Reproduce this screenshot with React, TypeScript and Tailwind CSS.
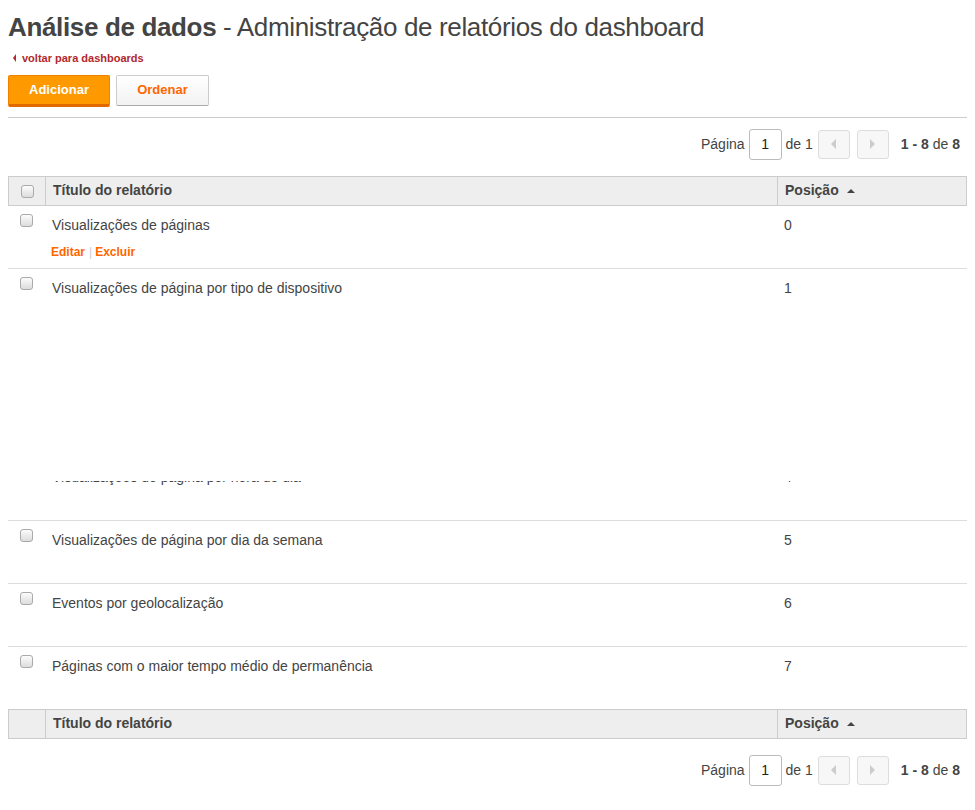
const reports = [
  'Visualizações de páginas',
  'Visualizações de página por tipo de dispositivo',
  'Visualizações de página por navegador',
  'Visualizações de página por sistema operacional',
  'Visualizações de página por hora do dia',
  'Visualizações de página por dia da semana',
  'Eventos por geolocalização',
  'Páginas com o maior tempo médio de permanência',
];

function Box() {
  return (
    <span className="inline-block h-[13px] w-[13px] rounded-[3px] border border-[#aaa] bg-gradient-to-b from-[#fcfcfc] to-[#dcdcdc]" />
  );
}

function Pager() {
  return (
    <div className="flex items-center justify-end gap-[4px] pr-[7px] text-[14px] text-[#444]">
      <span>Página</span>
      <span className="flex h-[31px] w-[33px] items-center justify-center rounded-[3px] border border-[#bbb] text-[#222]">
        1
      </span>
      <span>de 1</span>
      <span className="ml-[1px] flex h-[29px] w-[32px] items-center justify-center rounded-[3px] border border-[#ddd] bg-[#f7f7f7]">
        <span className="h-0 w-0 border-y-[5px] border-r-[5px] border-y-transparent border-r-[#ccc]" />
      </span>
      <span className="ml-[3px] flex h-[29px] w-[32px] items-center justify-center rounded-[3px] border border-[#ddd] bg-[#f7f7f7]">
        <span className="h-0 w-0 border-y-[5px] border-l-[5px] border-y-transparent border-l-[#ccc]" />
      </span>
      <span className="ml-[8px]">
        <b>1 - 8</b> de <b>8</b>
      </span>
    </div>
  );
}

function Head({ check }: { check: boolean }) {
  return (
    <div className="flex h-[30px] border border-[#ccc] bg-[#eee] text-[14px] font-bold text-[#444]">
      <div className="flex w-[37px] items-center justify-center border-r border-[#ccc] pt-[2px]">
        {check && <Box />}
      </div>
      <div className="flex w-[732px] items-center border-r border-[#ccc] pl-[7px]">Título do relatório</div>
      <div className="flex flex-1 items-center pl-[7px]">
        Posição
        <span className="ml-[8px] h-0 w-0 border-x-[4px] border-b-[4px] border-x-transparent border-b-[#444]" />
      </div>
    </div>
  );
}

export default function App() {
  return (
    <div className="min-h-[810px] bg-white px-[8px] font-['Liberation_Sans',Arial,sans-serif] text-[#444]">
      <h1 className="pt-[11px] text-[26px] leading-[32px] tracking-[-0.35px] text-[#444]">
        <b>Análise de dados</b> - Administração de relatórios do dashboard
      </h1>
      <a className="mt-[7px] flex items-center text-[11px] font-bold text-[#b3282d]">
        <span className="ml-[5px] mr-[6px] h-0 w-0 border-y-[4px] border-r-[3px] border-y-transparent border-r-[#b3282d]" />
        voltar para dashboards
      </a>
      <div className="mt-[8px] flex gap-[6px]">
        <button className="h-[32px] w-[102px] rounded-[2px] border border-[#f08000] border-b-[3px] border-b-[#e06a00] bg-[#ff9900] text-[13px] font-bold text-white">
          Adicionar
        </button>
        <button className="h-[31px] w-[93px] rounded-[2px] border border-[#ccc] border-b-[#aaa] bg-gradient-to-b from-white to-[#f2f2f2] text-[13px] font-bold text-[#ff6600]">
          Ordenar
        </button>
      </div>
      <div className="mt-[10px] border-t border-[#ccc]" />
      <div className="mt-[11px]">
        <Pager />
      </div>
      <div className="relative mt-[16px]">
        <Head check />
        {reports.map((title, i) => (
          <div
            key={title}
            className={`flex border-b border-[#ddd] text-[14px] text-[#444] ${i === reports.length - 1 ? 'h-[62px] border-b-0' : 'h-[63px]'}`}
          >
            <div className="flex w-[37px] justify-center pt-[8px]">
              <Box />
            </div>
            <div className="w-[732px] pl-[7px] pt-[10px]">
              <div className="leading-[18px]">{title}</div>
              <div className={`-ml-[1px] mt-[9px] flex items-center text-[12px] font-bold text-[#ff6600] ${i === 0 ? '' : 'invisible'}`}>
                Editar
                <span className="ml-[4px] mr-[3px] font-normal text-[#ccc]">|</span>
                Excluir
              </div>
            </div>
            <div className="flex-1 pl-[7px] pt-[10px] leading-[18px]">{i}</div>
          </div>
        ))}
        <div className="absolute left-[-8px] right-[-8px] top-[124px] h-[181px] bg-white" />
        <Head check={false} />
      </div>
      <div className="mt-[16px]">
        <Pager />
      </div>
    </div>
  );
}
